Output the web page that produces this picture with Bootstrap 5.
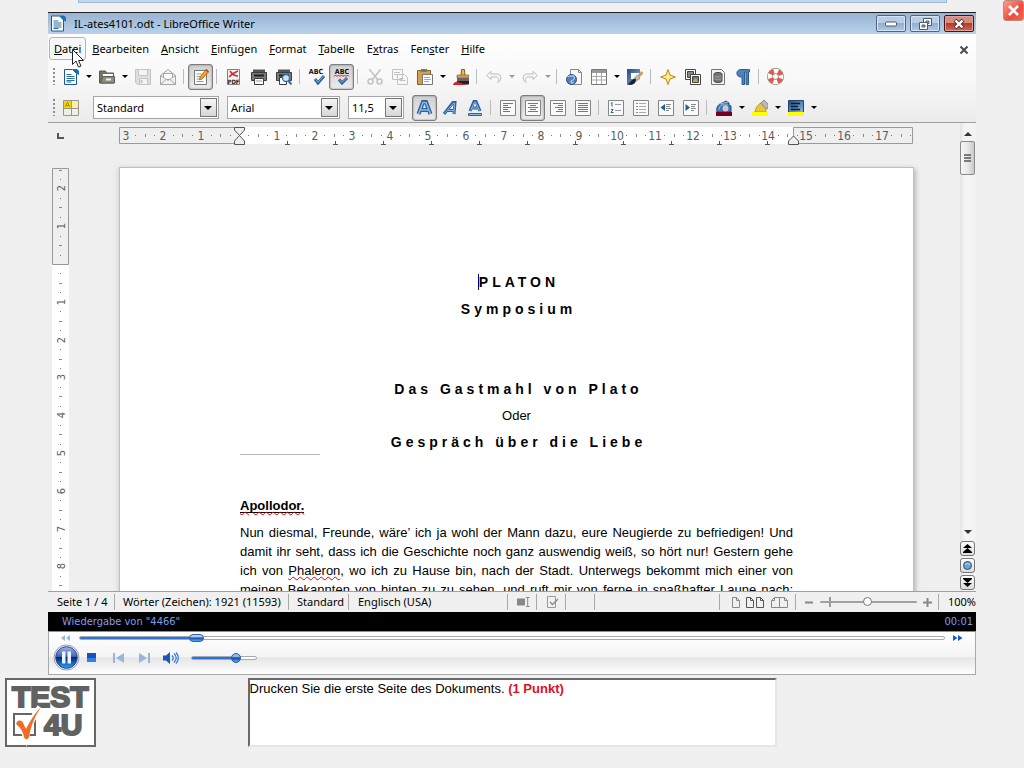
<!DOCTYPE html>
<html lang="de">
<head>
<meta charset="utf-8">
<meta name="viewport" content="width=device-width, initial-scale=1">
<title>IL-ates4101.odt - LibreOffice Writer</title>
<link href="https://cdn.jsdelivr.net/npm/bootstrap@5.3.0/dist/css/bootstrap.min.css" rel="stylesheet">
<style>
  body { background: #f0f0f0; color: #000; font: 11px/16px "Noto Sans", "Open Sans", sans-serif; }
  button, select, input { font: inherit; color: inherit; }
  .app { height: 100vh; min-height: 480px; overflow: hidden; }
  .mx-frame { margin-left: 48px; margin-right: 48px; }

  /* top strip */
  .strip { height: 12px; flex: none; padding: 0 29px 0 30px; }
  .strip div { height: 3px; background: #c3d6ec; border: 1px solid #9bbce0; border-top: 0; }
  .quit { top: 0; right: 0; width: 21px; height: 21px; padding: 0; border: 1px solid #b98a80; border-radius: 3px; background: linear-gradient(135deg, #ff9c8c, #ee4b3c 60%, #f0695a); display: flex; }

  /* title bar */
  .titlebar { height: 22px; border-top: 1px solid #222; background: linear-gradient(#98b3d3, #b9d1ea); padding: 0 2px; }
  .wbtn { width: 30px; height: 17px; padding: 0; border: 1px solid #536680; border-radius: 2px; box-shadow: inset 0 0 0 1px #d5e4f4; background: linear-gradient(#b9cee6 45%, #92afd0 50%, #aecae8); display: flex; align-items: center; justify-content: center; }
  .wbtn.red { border-color: #4c1015; box-shadow: inset 0 0 0 1px #e0a39a; background: linear-gradient(#d58d80 45%, #b53a2a 50%, #cf6a58); }

  /* menu and tool bars */
  .bars { background: linear-gradient(#fff, #f8f8f8 50%, #ebebeb); border-bottom: 1px solid #a0a0a0; height: 89px; }
  .menus { height: 27px; padding: 2px 6px 0 1px; }
  .menus button { height: 23px; padding: 0 5px; border: 1px solid transparent; border-radius: 3px; background: none; line-height: 20px; }
  .menus button:first-child { border-color: #b4b4b4; background: #f7f7f7; padding: 0 4px; }
  .pointer { top: 49px; left: 72px; z-index: 5; }
  .tools { height: 31px; padding-left: 5px; }
  .grip { width: 2px; height: 17px; margin-right: 3px; background: repeating-linear-gradient(#8d8d8d 0 2px, transparent 2px 4px); }
  .tool { width: 25px; height: 26px; padding: 0; border: 1px solid transparent; border-radius: 3px; background: none; display: flex; align-items: center; justify-content: center; flex: none; }
  .tool.on { border-color: #7d7d7d; background: linear-gradient(#d0d0d0, #ececec); box-shadow: inset 0 0 2px #777; }
  .drop { width: 11px; height: 20px; padding: 0; border: 0; background: none; display: flex; align-items: center; justify-content: center; flex: none; }
  .drop::after, .combo::after { content: ""; border: 3px solid transparent; border-top-color: #000; border-bottom: 0; }
  .drop.off::after { border-top-color: #999; }
  .bar { width: 1px; height: 15px; margin: 0 4px 0 3px; background: #bbb; flex: none; }
  .combo { position: relative; height: 23px; border: 1px solid #a5a5aa; background: #fff; }
  .combo select { width: 100%; height: 21px; padding: 0 3px; border: 0; appearance: none; background: none; font: 11px/16px "Noto Sans", sans-serif; }
  .combo::before { content: ""; position: absolute; right: 1px; top: 1px; bottom: 1px; width: 17px; border: 1px solid #777; background: linear-gradient(#f6f6f6, #d6d6d6); pointer-events: none; }
  .combo::after { position: absolute; right: 6px; top: 9px; border-width: 4px 4px 0; pointer-events: none; }
  .c-style { width: 126px; margin: 0 8px 0 10px; } .c-font { width: 113px; margin-right: 8px; } .c-size { width: 56px; margin-right: 8px; }

  /* work area */
  .work { min-height: 0; background: #efefef; border-bottom: 1px solid #a0a0a0; }
  .vcol { width: 25px; padding: 10px 0 0 4px; overflow: hidden; }
  .sheetcol { min-width: 0; padding-top: 4px; overflow: hidden; }
  .vrule { margin-top: 28px; }
  .sheet { width: 795px; margin-top: 22px; min-height: 1123px; padding: 104px 120px 0; background: #fff; border: 1px solid #c0c0c0; box-shadow: 2px 2px 4px #bbb, -2px 0 4px #ddd; font: 13px/19px "Liberation Sans", Arial, sans-serif; }
  .sheet h1, .sheet h2 { font-size: 14px; font-weight: 700; line-height: 20px; letter-spacing: 4px; text-indent: 4px; text-align: center; margin: 0 0 7px; }
  .sheet h1 + h2 { margin-bottom: 60px; }
  .sheet h1 span { border-left: 1px solid #000080; }
  .sheet .or { line-height: 20px; margin: 0 0 6px; text-align: center; }
  .rule80 { width: 80px; height: 1px; background: #b8b8b8; margin: -5px 0 41px; }
  .sheet h3 { font-size: 13px; line-height: 20px; font-weight: 700; margin: 0 0 7px; }
  .sheet .text { text-align: justify; text-align-last: justify; }
  .spell { text-decoration: underline wavy #e00000 1px; text-underline-offset: 1px; }
  h3 .spell { box-shadow: inset 0 -1px #000; }
  .scroll { width: 16px; background: linear-gradient(90deg, #e4e4e4, #f5f5f5 30%, #f2f2f2); padding: 4px 0 1px; }
  .scroll button { border: 0; background: none; padding: 0; width: 15px; height: 14px; display: flex; align-items: center; justify-content: center; flex: none; }
  .scroll .thumb { height: 34px; border: 1px solid #8a8a8a; border-radius: 2px; background: linear-gradient(90deg, #f6f6f6, #e8e8e8 50%, #c9c9c9); }
  .scroll .nav3 { width: 15px; height: 15px; border: 1px solid #777; border-radius: 3px; background: linear-gradient(#fff, #ddd); margin-top: 2px; }
  .num { font: 12px "DejaVu Sans Condensed", "Noto Sans", sans-serif; fill: #5c5c5c; text-anchor: middle; }
  #vruler .num { font-size: 11px; }

  /* status bar */
  .status { height: 20px; }
  .status > div { padding: 0 6px 0 9px; display: flex; align-items: center; white-space: nowrap; height: 16px; border-right: 1px solid #a8a8a8; }
  .status > div:last-child { border: 0; }
  .w-29 { width: 29px; }

  /* sliders */
  input[type=range] { -webkit-appearance: none; appearance: none; background: none; margin: 0; padding: 0; height: 12px; display: block; min-width: 0; }
  input[type=range]::-webkit-slider-runnable-track { -webkit-appearance: none; height: 4px; border-radius: 2px; border: 1px solid #a4aab4; background: #fff; }
  input[type=range]::-webkit-slider-thumb { -webkit-appearance: none; }
  input[type=range].seek::-webkit-slider-runnable-track { background: linear-gradient(90deg, #2d71dd 13%, #fff 13%); }
  input[type=range].seek::-webkit-slider-thumb { width: 15px; height: 8px; margin-top: -3px; border-radius: 4px; border: 1px solid #3560a8; background: linear-gradient(#b9cbee 30%, #1d48a8 50%, #49b0ee); }
  input[type=range].vol { width: 66px; }
  input[type=range].vol::-webkit-slider-runnable-track { background: linear-gradient(90deg, #2d71dd 70%, #fff 70%); }
  input[type=range].vol::-webkit-slider-thumb { width: 10px; height: 10px; margin-top: -4px; border-radius: 5px; border: 1px solid #2b559f; background: linear-gradient(#9db6e6 30%, #1543a6 50%, #43b8f4); }
  input[type=range].zoomer { width: 97px; background: linear-gradient(#999, #999) 9px 1px / 2px 10px no-repeat; }
  input[type=range].zoomer::-webkit-slider-runnable-track { height: 2px; border: 0; background: #a0a0a0; }
  input[type=range].zoomer::-webkit-slider-thumb { width: 9px; height: 9px; margin-top: -4px; border: 1px solid #777; border-radius: 5px; background: #fff; }

  /* media player */
  .now { height: 19px; background: #000; color: #7f9cf0; padding: 0 3px 0 14px; font: 11px/19px "DejaVu Sans Condensed", sans-serif; }
  .player { height: 44px; border: 1px solid #a9a9a9; border-top-color: #8f8f8f; background: linear-gradient(#fff, #f4f4f4 60%, #e5e5e5 61%, #fff); }
  .player button { border: 0; background: none; padding: 0; display: flex; align-items: center; justify-content: center; }
  .seekrow { height: 12px; padding: 0 12px 0 12px; }

  /* question */
  .task { display: grid; grid-template-columns: 1fr minmax(0, 529px) 1fr; margin: 3px 0 21px; }
  .task .logo { margin-left: 5px; }
  .question { height: 69px; background: #fff; border: 2px solid; border-color: #696969 #e6e6e6 #e6e6e6 #696969; font: 13px/18px "Liberation Sans", Arial, sans-serif; }
  .question strong { color: #e00f1e; }
</style>
</head>
<body>
<svg width="0" height="0" class="position-absolute" aria-hidden="true">
  <defs>
    <linearGradient id="gb" x1="0" y1="0" x2="1" y2="1"><stop offset="0" stop-color="#1c4d84"/><stop offset="1" stop-color="#8db6e0"/></linearGradient>
    <linearGradient id="gp" x1="0" y1="0" x2="0" y2="1"><stop offset="0" stop-color="#9fb5e2"/><stop offset=".45" stop-color="#3f66b4"/><stop offset=".5" stop-color="#06247c"/><stop offset="1" stop-color="#27a7f0"/></linearGradient>
    <symbol id="doc" viewBox="0 0 16 16"><path d="M1.500.5h8l4 4v11h-12z" fill="#fff" stroke="#1b5a91"/><path d="M9.500 0H14l2 2v4l-2-1z" fill="#1b6eb0"/><path d="M3.500 5.500h5M3.500 7.500h8M3.500 9.500h8M3.500 11.500h8M3.500 13h5" stroke="#2a6ca5"/></symbol>
    <symbol id="page" viewBox="0 0 16 16"><path d="M.5.5h15v15H.5z" fill="#fafafa" stroke="#858585"/></symbol>
  </defs>
</svg>

<div class="app d-flex flex-column position-relative">
  <div class="strip mx-frame"><div></div></div>
  <button class="quit position-absolute align-items-center justify-content-center" aria-label="Beenden"><svg width="13" height="13" viewBox="0 0 13 13"><path d="M2 2l9 9M11 2l-9 9" stroke="#fff" stroke-width="2.600"/></svg></button>

  <header class="mx-frame">
    <div class="titlebar d-flex align-items-center">
      <svg width="16" height="17" class="me-2"><use href="#doc"/></svg>
      <span class="flex-grow-1">IL-ates4101.odt - LibreOffice Writer</span>
      <div class="d-flex gap-1">
        <button class="wbtn" aria-label="Minimieren"><svg width="12" height="6"><rect x=".5" y="1" width="11" height="4" rx="1" fill="#fff" stroke="#4d5a6b"/></svg></button>
        <button class="wbtn" aria-label="Wiederherstellen"><svg width="13" height="12"><g fill="#fff" stroke="#4d5a6b"><path d="M4.500.5h8v7h-8z"/><path d="M7 3h3v2.500H7z" fill="#a9c0dc"/><path d="M.5 4.500h8v7h-8z"/><path d="M3 7h3v2H3z" fill="#a9c0dc"/></g></svg></button>
        <button class="wbtn red" aria-label="Schließen"><svg width="12" height="10"><path d="M2 1l8 8M10 1L2 9" stroke="#4b2b30" stroke-width="4"/><path d="M2.500 1.500l7 7M9.500 1.500l-7 7" stroke="#fff" stroke-width="2.400"/></svg></button>
      </div>
    </div>
    <div class="bars">
      <nav class="menus d-flex align-items-center">
        <button><u>D</u>atei</button><button><u>B</u>earbeiten</button><button><u>A</u>nsicht</button><button><u>E</u>infügen</button><button><u>F</u>ormat</button><button><u>T</u>abelle</button><button>E<u>x</u>tras</button><button>Fen<u>s</u>ter</button><button><u>H</u>ilfe</button>
        <button class="ms-auto p-0" aria-label="Dokument schließen"><svg width="10" height="10" viewBox="0 0 10 10"><path d="M1.500 1.500l7 7M8.500 1.500l-7 7" stroke="#4a4a4a" stroke-width="2"/></svg></button>
      </nav>

      <div class="tools d-flex align-items-center">
        <span class="grip"></span>
        <button class="tool" aria-label="Neu"><svg width="16" height="16"><use href="#doc"/></svg></button><button class="drop" aria-label="Neu, Auswahl"></button>
        <button class="tool" aria-label="Öffnen"><svg width="16" height="16"><path d="M.5 2h6l1 2h7v10H.5z" fill="#75756a" stroke="#5b5b52"/><path d="M4 5h10v4H4z" fill="#fff"/><path d="M1.500 14L4 7.500h11.500V14z" fill="#8d8d80" stroke="#5b5b52"/><path d="M7 9.500h5v2H7z" fill="#eee"/></svg></button><button class="drop" aria-label="Öffnen, Auswahl"></button>
        <button class="tool" aria-label="Speichern" disabled><svg width="16" height="16" fill="#f4f4f4" stroke="#c4c4c4"><path d="M.5.5h15v15h-13l-2-2z" fill="#dedede"/><path d="M3.500.5h9v6h-9z"/><path d="M4.500 9.500h8v6h-8z"/><path d="M6.500 11v3" stroke-width="2"/></svg></button>
        <button class="tool" aria-label="E-Mail"><svg width="16" height="16" fill="#f3f3f3" stroke="#a5a5a5"><path d="M.5 6.500L8 .5l7.500 6v9H.5z"/><path d="M3.500 4.500h9v6h-9z" fill="#fff"/><path d="M.5 6.500l7.500 5 7.500-5v9H.5z"/><path d="M.5 15.500l5.500-5M15.500 15.500l-5.500-5"/></svg></button>
        <span class="bar"></span>
        <button class="tool on" aria-label="Bearbeiten"><svg width="16" height="16"><path d="M1.500 1.500h12v14h-12z" fill="#fff" stroke="#777"/><path d="M3.500 5h5M3.500 7.500h4M3.500 10h3M3.500 12.500h7" stroke="#999"/><path d="M7 8l6-7.500L15.500 3l-6.500 7-2.500.8z" fill="#f4a321" stroke="#a35c0a" stroke-width=".8"/><path d="M13 .5L15.500 3" stroke="#d23b2c" stroke-width="1.500"/></svg></button>
        <span class="bar"></span>
        <button class="tool" aria-label="PDF"><svg width="16" height="16"><path d="M1.500.5h12v15h-12z" fill="#f6f6f6" stroke="#808080"/><path d="M4 2c2 3 5 5 8 5M12 2C9 3 5 6 3 8" stroke="#d8222c" stroke-width="1.500" fill="none"/><text x="7.500" y="14.500" font-size="6" font-weight="700" text-anchor="middle" font-family="DejaVu Sans Condensed" fill="#222">PDF</text></svg></button>
        <button class="tool" aria-label="Drucken"><svg width="16" height="16"><path d="M2 .5h12v4H2z" fill="#555"/><path d="M.5 3.500h15v8H.5z" fill="#7a7a76" stroke="#3c3c3c"/><path d="M3 5.500h10v2H3z" fill="#222"/><path d="M3.500 9.500h9v6h-9z" fill="#fff" stroke="#3c3c3c"/><path d="M5 12h6" stroke="#999"/></svg></button>
        <button class="tool" aria-label="Seitenansicht"><svg width="16" height="16"><path d="M2 .5h12v4H2z" fill="#555"/><path d="M.5 3.500h15v8H.5z" fill="#7a7a76" stroke="#3c3c3c"/><path d="M3 5.500h10v2H3z" fill="#222"/><path d="M3.500 8.500h7v7h-7z" fill="#fff" stroke="#3c3c3c"/><circle cx="10" cy="9" r="3.500" fill="#cfe3f5" stroke="#356ba5" stroke-width="1.300"/><path d="M12.500 12l3 3.500" stroke="#356ba5" stroke-width="2"/></svg></button>
        <span class="bar"></span>
        <button class="tool" aria-label="Rechtschreibung"><svg width="18" height="17"><text x="8" y="6" font-size="7" font-weight="700" text-anchor="middle" font-family="DejaVu Sans Condensed" fill="#111">ABC</text><path d="M7 11l3 4 6-7" stroke="#2f6196" stroke-width="3" fill="none"/><path d="M7.500 11.300l2.500 3 5.500-6" stroke="#80aedb" fill="none"/></svg></button>
        <button class="tool on" aria-label="Automatische Prüfung"><svg width="18" height="17"><text x="9" y="6" font-size="7" font-weight="700" text-anchor="middle" font-family="DejaVu Sans Condensed" fill="#111">ABC</text><path d="M1 8.500l1.500-1.500L4 8.500 5.500 7 7 8.500 8.500 7 10 8.500 11.500 7 13 8.500 14.500 7 16 8.500" stroke="#e11" fill="none"/><path d="M6 11.500l3 3.500 5-5" stroke="#2f6196" stroke-width="3" fill="none"/><path d="M6.500 12l2.500 2.500 4.500-4.500" stroke="#80aedb" fill="none"/></svg></button>
        <span class="bar"></span>
        <button class="tool" aria-label="Ausschneiden" disabled><svg width="16" height="16" fill="none" stroke="#c2c2c2" stroke-width="1.500"><path d="M2.500.5l8 10M13.500.5l-8 10"/><circle cx="3.500" cy="12.500" r="2.500"/><circle cx="12.500" cy="12.500" r="2.500"/></svg></button>
        <button class="tool" aria-label="Kopieren" disabled><svg width="16" height="16" fill="#f8f8f8" stroke="#c2c2c2"><path d="M.5.5h10v10H.5zM5.500 5.500h7l3 3v7h-10z"/><path d="M2 3.500h6M2 5.500h3M7.500 9.500h4M7.500 11.500h6"/></svg></button>
        <button class="tool" aria-label="Einfügen"><svg width="16" height="16"><path d="M.5 1.500h13v14H.5z" fill="#d69d4a" stroke="#8d5d1c"/><path d="M4 0h6v3H4z" fill="#777"/><path d="M5.500 5.500h10v10h-10z" fill="#fff" stroke="#777"/><path d="M7 8.500h6M7 10.500h7M7 12.500h5" stroke="#aaa"/></svg></button><button class="drop" aria-label="Einfügen, Auswahl"></button>
        <button class="tool" aria-label="Format übertragen"><svg width="16" height="16"><path d="M8.500.5h3l.5 6H8z" fill="#ecb765" stroke="#8b5a1a"/><path d="M4 6h12v3H4z" fill="#d7a04e" stroke="#80541b" stroke-width=".6"/><path d="M4 9h12v3H4z" fill="#666"/><path d="M4 12h12v3.500H3z" fill="#222"/><path d="M0 15.500c1-2 3-3 5-2.500l9 3H0z" fill="#d7202c"/></svg></button>
        <span class="bar"></span>
        <button class="tool" aria-label="Rückgängig" disabled><svg width="16" height="12" fill="#f7f7f7" stroke="#bdbdbd"><path d="M.5 4.500L5 .5v2.500h6c5 0 5 6 1 8.500 1-3 1-5-2-5.500H5v2.500z"/></svg></button><button class="drop off" aria-label="Rückgängig, Auswahl"></button>
        <button class="tool" aria-label="Wiederherstellen" disabled><svg width="16" height="12" fill="#f7f7f7" stroke="#bdbdbd"><path d="M15.500 4.500L11 .5v2.500H5c-5 0-5 6-1 8.500C3 8.500 3 6.500 6 6h5v2.500z"/></svg></button><button class="drop off" aria-label="Wiederherstellen, Auswahl"></button>
        <span class="bar"></span>
        <button class="tool" aria-label="Hyperlink"><svg width="16" height="16"><path d="M4.500.5h8l3 3v12h-11z" fill="#f6f6f6" stroke="#888"/><path d="M12.500.5v3h3" fill="none" stroke="#888"/><circle cx="5.500" cy="10.500" r="5" fill="#4a7fb8" stroke="#28527f"/><path d="M1.500 8c2-2 3 0 4.500-1s3 1 2 3-3 1-3 3 2 1 3 0" fill="none" stroke="#a9cbe9" stroke-width="1.300"/></svg></button>
        <button class="tool" aria-label="Tabelle"><svg width="16" height="16"><path d="M.5.5h15v15H.5z" fill="#fff" stroke="#777"/><path d="M1 1h14v3H1z" fill="#999"/><path d="M5.500 4v11M10.500 4v11M1 7.500h14M1 11h14" stroke="#aaa"/></svg></button><button class="drop" aria-label="Tabelle, Auswahl"></button>
        <button class="tool" aria-label="Zeichnen"><svg width="16" height="16"><path d="M0 0h13v10L4 16H0z" fill="url(#gb)"/><path d="M4 4h8v6H4z" fill="#fff"/><path d="M15.500 3L9 10" stroke="#d39b5f" stroke-width="3"/><path d="M11 7L7 11.500" stroke="#bbb" stroke-width="4"/><path d="M9 10c-3-1-5 2-8 5.500 4 1 8 0 8-5.500z" fill="#222"/></svg></button>
        <span class="bar"></span>
        <button class="tool" aria-label="Navigator"><svg width="16" height="16"><path d="M8 .5l2 5.500 5.500 2-5.500 2-2 5.500L6 10 .5 8 6 6z" fill="#fbe06b" stroke="#c18a14"/><path d="M8 4v8M4 8h8" stroke="#fff5b8"/></svg></button>
        <button class="tool" aria-label="Galerie"><svg width="16" height="16"><g fill="#fff" stroke="#444"><path d="M.5.5h10v10H.5z"/><path d="M2.500 2.500h6v6h-6z" fill="#888"/><path d="M5.500 5.500h10v10h-10z"/><path d="M7.500 7.500h6v6h-6z" fill="#777"/></g><path d="M8 12l3-3 2 4H8z" fill="#c5b23e"/></svg></button>
        <button class="tool" aria-label="Datenquellen"><svg width="14" height="16"><path d="M.5.5h10l3 3v12H.5z" fill="#f4f4f4" stroke="#777"/><path d="M3 5v7c0 2 8 2 8 0V5c0-2-8-2-8 0z" fill="#777" stroke="#444"/><path d="M3 7c1 1.500 7 1.500 8 0M3 9.500c1 1.500 7 1.500 8 0" fill="none" stroke="#aaa" stroke-width=".7"/></svg></button>
        <button class="tool" aria-label="Steuerzeichen"><svg width="14" height="16"><path d="M12.500.5H5C-.5.5-.5 8 5 8h1v7.500h2.500V3H10v12.500h2.500V3h1V.5z" fill="#4f82bb" stroke="#2d5b90"/></svg></button>
        <span class="bar"></span>
        <button class="tool" aria-label="Hilfe"><svg width="17" height="17"><circle cx="8.500" cy="8.500" r="5.500" fill="none" stroke="#888" stroke-width="6"/><circle cx="8.500" cy="8.500" r="5.500" fill="none" stroke="#fff" stroke-width="4.500"/><circle cx="8.500" cy="8.500" r="5.500" fill="none" stroke="#e4574a" stroke-width="4.800" stroke-dasharray="4.320" stroke-dashoffset="-2"/></svg></button>
      </div>

      <div class="tools d-flex align-items-center">
        <span class="grip"></span>
        <button class="tool" aria-label="Formatvorlagen"><svg width="16" height="16"><path d="M.5.5h15v15H.5zM8.500 0v16M0 8.500h16" fill="#eeeeea" stroke="#96968c"/><path d="M1 1h7v7H1z" fill="#f6d800"/><path d="M9 1h6v7H9z" fill="#f9edaa"/><path d="M2.500 7L4 2.500h1L6.500 7M3 5.500h3" stroke="#9a7e00" fill="none" stroke-width=".8"/></svg></button>
        <div class="combo c-style"><select aria-label="Absatzvorlage"><option>Standard</option></select></div>
        <div class="combo c-font"><select aria-label="Schriftname"><option>Arial</option></select></div>
        <div class="combo c-size"><select aria-label="Schriftgröße"><option>11,5</option></select></div>
        <button class="tool on" aria-label="Fett"><svg width="17" height="16"><path d="M2.500 14L7 2h3l4.500 12M4.500 10h8" fill="none" stroke="#2c5f9b" stroke-width="4"/><path d="M2.500 14L7 2.500h3L14.500 14M4.500 10h8" fill="none" stroke="#8fb9e6" stroke-width="1.500"/></svg></button>
        <button class="tool" aria-label="Kursiv"><svg width="16" height="16"><path d="M2 14l9-11.500h2L12 14M5.500 10.500h7" fill="none" stroke="#2c5f9b" stroke-width="3"/><path d="M2.500 13.500L11.500 3h1L12 13.500M6 10.500h6" fill="none" stroke="#8fb9e6"/></svg></button>
        <button class="tool" aria-label="Unterstrichen"><svg width="16" height="16"><path d="M3 11l4-9.500h2L13 11M5 8h6" fill="none" stroke="#2c5f9b" stroke-width="3"/><path d="M3.500 10.500L7.500 2h1l4 8.500M5 8h6" fill="none" stroke="#8fb9e6"/><path d="M1.500 13.500h13v2h-13z" fill="#8fb9e6" stroke="#2c5f9b"/></svg></button>
        <span class="bar"></span>
        <button class="tool" aria-label="Linksbündig"><svg width="16" height="16"><use href="#page"/><path d="M3 3.500h10M3 5.500h5M3 7.500h8M3 9.500h5M3 11.500h7" stroke="#777"/></svg></button>
        <button class="tool on" aria-label="Zentriert"><svg width="16" height="16"><use href="#page"/><path d="M3 3.500h10M5 5.500h6M3 7.500h10M5 9.500h6M3 11.500h10" stroke="#777"/></svg></button>
        <button class="tool" aria-label="Rechtsbündig"><svg width="16" height="16"><use href="#page"/><path d="M3 3.500h10M8 5.500h5M5 7.500h8M8 9.500h5M6 11.500h7" stroke="#777"/></svg></button>
        <button class="tool" aria-label="Blocksatz"><svg width="16" height="16"><use href="#page"/><path d="M3 3.500h10M3 5.500h10M3 7.500h10M3 9.500h10M3 11.500h10" stroke="#777"/></svg></button>
        <span class="bar"></span>
        <button class="tool" aria-label="Nummerierung"><svg width="16" height="16"><use href="#page"/><path d="M7 4.500h6M7 10.500h6" stroke="#999"/><path d="M3 3.500l1-1v4M3 9.500h2l-2 3h2.500" stroke="#245d9b" fill="none"/></svg></button>
        <button class="tool" aria-label="Aufzählung"><svg width="16" height="16"><use href="#page"/><path d="M6 3.500h7M6 6.500h7M6 9.500h7M6 12.500h7" stroke="#aaa"/><path d="M3 3.500h2M3 6.500h2M3 9.500h2M3 12.500h2" stroke="#888"/></svg></button>
        <button class="tool" aria-label="Einzug verkleinern"><svg width="16" height="16"><use href="#page"/><path d="M8 4.500h5M8 6.500h4M8 8.500h5M8 10.500h3" stroke="#888"/><path d="M7 4v7L2.500 7.500z" fill="#245d9b"/></svg></button>
        <button class="tool" aria-label="Einzug vergrößern"><svg width="16" height="16"><use href="#page"/><path d="M8 4.500h5M8 6.500h4M8 8.500h5M8 10.500h3" stroke="#888"/><path d="M2.500 4v7L7 7.500z" fill="#245d9b"/></svg></button>
        <span class="bar"></span>
        <button class="tool" aria-label="Schriftfarbe"><svg width="16" height="16"><path d="M1 12c-1-4 1-7 3-8l6-3 3 2v2l2 1v6z" fill="#4076b4" stroke="#214d80"/><path d="M4 4l8-2M3 10c0-3 1-4 3-5l6 0" stroke="#9ac1e8" fill="none"/><circle cx="9.500" cy="8.500" r="2.500" fill="#eab4c0" stroke="#cfe0f1"/><path d="M0 12h16v4H0z" fill="#75001f"/></svg></button><button class="drop" aria-label="Schriftfarbe, Auswahl"></button>
        <button class="tool" aria-label="Hervorheben"><svg width="16" height="16"><path d="M3 12c0-3 3-8 6-9l5 5v4z" fill="#e8c53c" stroke="#a48623" stroke-width=".7"/><path d="M9 3l3-3 4 4v4l-2 1z" fill="#bbb" stroke="#888"/><path d="M0 12h16v4H0z" fill="#ff0"/></svg></button><button class="drop" aria-label="Hervorheben, Auswahl"></button>
        <button class="tool" aria-label="Hintergrundfarbe"><svg width="16" height="16"><path d="M.5.5h15v12H.5z" fill="url(#gb)" stroke="#24466c"/><path d="M3 3.500h9M3 6.500h7M3 9.500h9" stroke="#0a1c33" stroke-width="1.300"/><path d="M0 12h16v4H0z" fill="#ff0"/></svg></button><button class="drop" aria-label="Hintergrundfarbe, Auswahl"></button>
      </div>
    </div>
  </header>
  <svg class="pointer position-absolute" width="13" height="20" aria-hidden="true"><path d="M.5.5v15l3.500-3.500 2.500 6 2.500-1-2.500-5.500h5z" fill="#fff" stroke="#222"/></svg>

  <main class="work mx-frame d-flex flex-grow-1">
    <div class="vcol">
      <svg class="d-block" width="20" height="7" aria-hidden="true"><path d="M6 0v5h6" fill="none" stroke="#555" stroke-width="2"/></svg>
      <svg id="vruler" class="vrule d-block" width="17"></svg>
    </div>
    <div class="sheetcol flex-grow-1">
      <svg id="hruler" class="d-block mx-auto" width="795" height="18"></svg>
      <article class="sheet mx-auto">
        <h1><span></span>PLATON</h1>
        <h2>Symposium</h2>
        <h2>Das Gastmahl von Plato</h2>
        <p class="or">Oder</p>
        <h2>Gespräch über die Liebe</h2>
        <div class="rule80"></div>
        <h3><span class="spell">Apollodor.</span></h3>
        <p class="text">Nun diesmal, Freunde, wäre’ ich ja wohl der Mann dazu, eure Neugierde zu befriedigen! Und damit ihr seht, dass ich die Geschichte noch ganz auswendig weiß, so hört nur! Gestern gehe ich von <span class="spell">Phaleron</span>, wo ich zu Hause bin, nach der Stadt. Unterwegs bekommt mich einer von meinen Bekannten von hinten zu zu sehen, und ruft mir von ferne in spaßhafter Laune nach:</p>
      </article>
    </div>
    <div class="scroll d-flex flex-column">
      <button aria-label="Nach oben"><svg width="8" height="4"><path d="M0 4l4-4 4 4z" fill="#333"/></svg></button>
      <button class="thumb" aria-label="Bildlauf"><svg width="7" height="9"><path d="M0 1h7M0 4h7M0 7h7" stroke="#555" stroke-width="1.500"/></svg></button>
      <button class="mt-auto" aria-label="Nach unten"><svg width="8" height="4"><path d="M0 0h8L4 4z" fill="#333"/></svg></button>
      <button class="nav3" aria-label="Vorherige Seite"><svg width="9" height="9"><path d="M4.500 0L9 4H0zM4.500 4L9 8H0zM0 8h9v1H0z"/></svg></button>
      <button class="nav3" aria-label="Navigation"><svg width="9" height="9"><circle cx="4.500" cy="4.500" r="4" fill="#70a3cc" stroke="#31506c"/><path d="M2 3.500c2-2 3 0 5-.5" stroke="#cfe3f3" fill="none"/></svg></button>
      <button class="nav3" aria-label="Nächste Seite"><svg width="9" height="9"><path d="M4.500 9L9 5H0zM4.500 5L9 1H0zM0 0h9v1H0z"/></svg></button>
    </div>
  </main>

  <footer class="mx-frame">
    <div class="status d-flex align-items-center">
      <div style="width:67px">Seite 1 / 4</div>
      <div style="width:174px; padding-left:8px">Wörter (Zeichen): 1921 (11593)</div>
      <div style="width:60px; padding-left:8px">Standard</div>
      <div style="width:159px">Englisch (USA)</div>
      <div class="w-29"><svg width="13" height="10"><path d="M0 1.500h8v7H0z" fill="#888"/><path d="M9 .5h3.500M9 9.500h3.500M10.700.5v9" stroke="#888"/></svg></div>
      <div class="w-29"><svg width="13" height="12"><path d="M1.500.5h8v11h-8z" fill="none" stroke="#999"/><path d="M4 6l2.500 2.500L12 3" fill="none" stroke="#888" stroke-width="1.300"/></svg></div>
      <div class="w-29"></div>
      <div class="flex-grow-1"></div>
      <div style="width:76px; gap:6px; padding-left:12px">
        <svg width="8" height="11" fill="none" stroke="#888"><path d="M.5.5h4l3 3v7h-7zM4.500.5v3h3"/></svg>
        <svg width="19" height="11" fill="none" stroke="#555"><path d="M.5.5h4l3 3v7h-7zM4.500.5v3h3M10.500.5h4l3 3v7h-7zM14.500.5v3h3"/></svg>
        <svg width="17" height="11" fill="none" stroke="#888"><path d="M8.500 1v9.500M3.500.5h5v10h-8v-7zM3.500.5v3h-3M8.500.5h5l3 3v7h-8M13.500.5v3h3"/></svg>
      </div>
      <div style="width:143px; gap:6px">
        <svg width="9" height="9"><path d="M0 4.500h8" stroke="#888" stroke-width="2"/></svg>
        <input class="zoomer" type="range" aria-label="Maßstab" min="0" max="100" value="49">
        <svg width="9" height="9" class="flex-shrink-0"><path d="M0 4.500h9M4.500 0v9" stroke="#888" stroke-width="2"/></svg>
      </div>
      <div class="p-0" style="width:37px"><span class="ms-auto">100%</span></div>
    </div>
    <div class="now d-flex justify-content-between"><span>Wiedergabe von "4466"</span><span>00:01</span></div>
    <div class="player">
      <div class="seekrow d-flex align-items-center gap-2">
        <button aria-label="Rücklauf"><svg width="10" height="6"><path d="M4 0v6L0 3zM9 0v6L5 3z" fill="#94b7e4"/></svg></button>
        <input class="seek flex-grow-1" type="range" aria-label="Position" max="1000" value="128">
        <button aria-label="Vorlauf"><svg width="10" height="6"><path d="M0 0v6l4.500-3zM5 0v6l4.500-3z" fill="#1857c8"/></svg></button>
      </div>
      <div class="d-flex align-items-center" style="padding-left:4px">
        <button aria-label="Pause"><svg width="27" height="27"><circle cx="13.500" cy="13.500" r="12.500" fill="#e9edf5" stroke="#9c9fae"/><circle cx="13.500" cy="13.500" r="10.800" fill="url(#gp)" stroke="#27479c"/><path d="M9 7.500h3.500v12H9zM14.500 7.500H18v12h-3.500z" fill="#eef3fb"/></svg></button>
        <button aria-label="Stopp" style="width:23px"><svg width="9" height="9"><path d="M0 0h9v9H0z" fill="#1850bd"/><path d="M0 5h9v4H0z" fill="#2f7fe8"/></svg></button>
        <button aria-label="Zurück" style="width:30px"><svg width="11" height="10"><path d="M0 0h2v10H0zM11 0v10L3 5z" fill="#9bb4dc"/></svg></button>
        <button aria-label="Weiter" style="width:22px"><svg width="11" height="10"><path d="M9 0h2v10H9zM0 0v10l8-5z" fill="#9bb4dc"/></svg></button>
        <button aria-label="Ton" style="width:32px"><svg width="16" height="12"><path d="M0 3.500h3L7 0v12L3 8.500H0z" fill="#1b55bd"/><path d="M9 3.500c1.500 1.500 1.500 3.500 0 5M11 1.500c3 3 3 6 0 9M13 .5c3 3.500 3 7.500 0 11" fill="none" stroke="#2e79de" stroke-width="1.200"/></svg></button>
        <input class="vol ms-1" type="range" aria-label="Lautstärke" value="73">
      </div>
    </div>
  </footer>

  <section class="task">
    <div class="logo"><svg class="d-block" width="91" height="69" role="img" aria-label="TEST4U">
      <path d="M1 1h89v67H1z" fill="#fff" stroke="#666" stroke-width="2"/>
      <g font-family="Liberation Sans, Arial, sans-serif" font-weight="700" font-size="30" fill="#616161" stroke="#616161" stroke-width="2"><text x="7" y="29">TEST</text><text x="39" y="57">4U</text></g>
      <path d="M9 36h21v21H9z" fill="none" stroke="#666" stroke-width="2"/>
      <path d="M14 45c3 4 5 9 7 14 3-12 8-22 14-30" fill="none" stroke="#fff" stroke-width="6"/>
      <path d="M12 44c2-2 5-2 6 1l3 6c4-8 9-16 15-22-6 9-10 18-12 30-1 3-4 3-5 0-1-5-3-9-7-12-1-1-1-2 0-3z" fill="#f26a25"/>
    </svg></div>
    <div class="question">Drucken Sie die erste Seite des Dokuments. <strong>(1 Punkt)</strong></div>
  </section>
</div>

<script src="https://cdn.jsdelivr.net/npm/bootstrap@5.3.0/dist/js/bootstrap.bundle.min.js"></script>
<script>
  // Rulers: 1 cm = 37.8 px at 100 % zoom, numbers count away from the page margin.
  const CM = 37.8;
  function scale(zero, end, draw) {
    for (let q = Math.ceil(-zero / CM * 4); q * CM / 4 + zero < end; q++) {
      const p = Math.round(zero + q * CM / 4);
      if (p > 1 && q !== 0) draw(p, ((q % 4) + 4) % 4, Math.abs(q / 4));
    }
  }
  const zero = 120, right = 674;
  let h = `<rect x="${zero}" y="0" width="${right - zero}" height="17" fill="#fff"/>
    <path d="M${zero} .5H.5v16H${zero}M${right}.5 .5H793.500v16H${right}.5z" fill="none" stroke="#999"/>`;
  scale(zero, 792, (p, k, n) => {
    if (k === 0) h += `<text class="num" x="${p}" y="13">${n}</text>`;
    else if (k === 2) h += `<path d="M${p}.5 7v3" stroke="#888"/>`;
    else h += `<path d="M${p} 8.500h1" stroke="#777"/>`;
  });
  for (let x = 168; x < right; x += 48) h += `<path d="M${x}.5 14v3M${x - 2} 17.500h5" stroke="#555"/>`;
  h += `<path d="M115.500 .5h10v2.500l-10 11v3.500h10V14l-10-11z" fill="#efefef" stroke="#555"/>
    <path d="M${right - 5}.5 17.500h10V14l-5-5-5 5z" fill="#efefef" stroke="#555"/>`;
  document.getElementById('hruler').innerHTML = h;

  // The vertical ruler fills the height that the work area leaves it.
  const vr = document.getElementById('vruler');
  function drawVertical() {
    const len = Math.max(100, document.querySelector('.work').clientHeight - 45);
    vr.setAttribute('height', len);
    let v = `<rect y="97" width="17" height="${len}" fill="#fff"/><path d="M.5.5h16v96H.5z" fill="none" stroke="#999"/>`;
    scale(96, len - 4, (p, k, n) => {
      if (k === 0) v += `<text class="num" transform="translate(13 ${p}) rotate(-90)">${n}</text>`;
      else if (k === 2) v += `<path d="M7 ${p}.5h3" stroke="#888"/>`;
      else v += `<path d="M8 ${p}.5h1" stroke="#777"/>`;
    });
    vr.innerHTML = v;
  }
  drawVertical();
  addEventListener('resize', drawVertical);
</script>
</body>
</html>
